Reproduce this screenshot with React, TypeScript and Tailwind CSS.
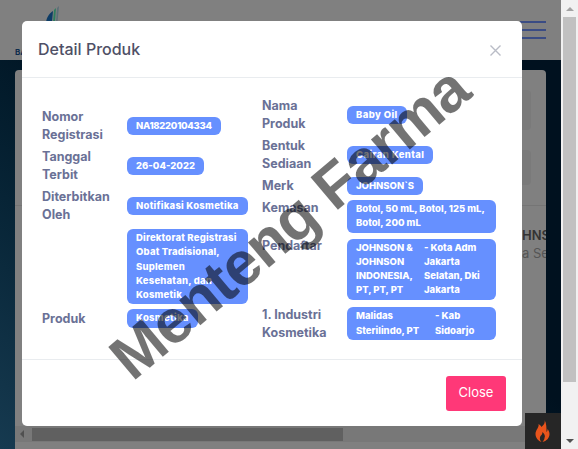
const font = "font-['Inter',sans-serif]";

function Badge({ children, className = "" }: { children: React.ReactNode; className?: string }) {
  return (
    <div className={`flex rounded-[6px] bg-[#6690ff] px-[9px] py-[2px] text-[9.5px] font-extrabold leading-[14.3px] text-white ${className}`}>
      {children}
    </div>
  );
}

function Row({ label, className = "", labelClass = "", children }: { label?: React.ReactNode; className?: string; labelClass?: string; children: React.ReactNode }) {
  return (
    <div className={`flex items-center ${className}`}>
      <div className={`w-[85px] shrink-0 text-[12.5px] font-bold leading-[18px] text-[#6a7196] ${labelClass}`}>{label}</div>
      <div className="flex min-w-0 flex-1">{children}</div>
    </div>
  );
}

export default function App() {
  return (
    <div className="relative h-[449px] w-[578px] overflow-hidden bg-[#f1f1f1] font-['Inter',sans-serif]">
      {/* Page behind the dialog */}
      <div className="h-[449px] w-[561px] bg-gradient-to-bl from-[#00111f] from-45% to-[#163a50]">
        <div className="relative h-[60px] bg-[#808080]">
          <svg className="absolute left-[46px] top-[5px]" width="14" height="17" viewBox="0 0 14 17">
            <path d="M0 17 C1 11 4 8 7 6 L6 17 Z" fill="#0d3c66" />
            <path d="M7 17 L8 5 L10 3 L9 17 Z" fill="#2e7d5e" />
            <path d="M10 17 L11 3 L13 1 L11.5 17 Z" fill="#5c6f78" />
          </svg>
          <span className="absolute left-[15px] top-[46px] text-[8px] font-bold text-[#0e2c4c]">BA</span>
          <div className="absolute left-[520px] top-[21px] flex w-[26px] flex-col gap-[6px]">
            <div className="h-[2px] bg-[#3a4c84]" />
            <div className="h-[2px] bg-[#3a4c84]" />
            <div className="h-[2px] bg-[#3a4c84]" />
          </div>
        </div>
        <div className="ml-[15px] mt-[10px] flex h-[379px] w-[531px] flex-col rounded-t-[4px] bg-[#808080] pt-[20px]">
          <div className="ml-auto mr-[15px] h-[40px] w-[100px] rounded-[4px] bg-[#7a7a7a]" />
          <div className="ml-auto mr-[15px] mt-[20px] h-[35px] w-[100px] rounded-[4px] bg-[#7a7a7a]" />
          <div className="mt-[20px] h-px bg-[#757575]" />
        </div>
      </div>

      {/* Right scrollbar */}
      <div className="absolute right-0 top-0 flex h-[449px] w-[17px] flex-col items-center bg-[#f1f1f1]">
        <div className="flex h-[17px] items-center justify-center">
          <div className="h-0 w-0 border-x-[4px] border-b-[4px] border-x-transparent border-b-[#a3a3a3]" />
        </div>
        <div className="h-[365px] w-[13px] bg-[#c1c1c1]" />
        <div className="mt-auto flex h-[17px] items-center justify-center">
          <div className="h-0 w-0 border-x-[4px] border-t-[4px] border-x-transparent border-t-[#505050]" />
        </div>
      </div>

      {/* Text of the page that shows beside the dialog */}
      <div className="absolute left-[522px] top-[227px] w-[24px] overflow-hidden whitespace-nowrap text-[13px] leading-[17px] text-[#333]">
        <div className="font-semibold">HNS</div>
        <div className="mt-[1px] text-[#555]">a Se</div>
      </div>

      {/* Horizontal scrollbar of the page */}
      <div className="absolute left-[15px] top-[426px] flex h-[16px] w-[510px] items-center bg-[#787878]">
        <div className="ml-[5px] h-0 w-0 border-y-[4px] border-r-[4px] border-y-transparent border-r-[#505050]" />
        <div className="ml-[8px] h-[13px] w-[311px] bg-[#606060]" />
      </div>

      {/* Flame badge */}
      <div className="absolute left-[525px] top-[413px] flex h-[36px] w-[36px] items-center justify-center bg-[#262626]">
        <svg width="17" height="22" viewBox="0 0 16 22">
          <path fillRule="evenodd" d="M9 0c1 3-1 5-3 7C5 5 4 5 3 4c1 3-3 6-3 10 0 4 3 7 6 8-2-2-2-4-1-6 1-1 2-2 2-4 2 2 3 4 2 6 0 1-1 3-2 4 4-1 7-4 7-8 0-2-1-4-2-5 0 1 0 2-1 3C11 8 11 3 9 0z" fill="#e8541c" />
        </svg>
      </div>

      {/* Dialog */}
      <div className={`absolute left-[22px] top-[21px] flex h-[405px] w-[500px] flex-col rounded-[5px] bg-white ${font}`}>
        <div className="flex h-[57px] shrink-0 items-center justify-between border-b border-[#e9ecef] pl-[16px] pr-[21px]">
          <h2 className="text-[16px] font-medium leading-[24px] text-[#4f5066]">Detail Produk</h2>
          <svg width="11" height="11" viewBox="0 0 11 11" className="mt-[2px]">
            <path d="M.5.5l10 10M10.5.5l-10 10" stroke="#b9bcc6" strokeWidth="1.4" />
          </svg>
        </div>

        <div className="grid h-[281px] shrink-0 grid-cols-[220px_1fr] pl-[20px] pr-[26px]">
          <div className="flex flex-col pt-[30px]">
            <Row label={<>Nomor<br />Registrasi</>} className="h-[36px]"><Badge className="tracking-[-0.3px]">NA18220104334</Badge></Row>
            <Row label={<>Tanggal<br />Terbit</>} className="mt-[4px] h-[36px]"><Badge>26-04-2022</Badge></Row>
            <Row label={<>Diterbitkan<br />Oleh</>} className="mt-[4px] h-[36px]"><Badge className="tracking-[0.25px]">Notifikasi Kosmetika</Badge></Row>
            <Row className="mt-[5px]"><Badge className="w-[121px] tracking-[0.2px]">Direktorat Registrasi Obat Tradisional, Suplemen Kesehatan, dan Kosmetik</Badge></Row>
            <Row label="Produk" className="mt-[5px]"><Badge className="tracking-[0.3px]">Kosmetika</Badge></Row>
          </div>
          <div className="flex flex-col pt-[19px]">
            <Row label={<>Nama<br />Produk</>} className="h-[36px]"><Badge className="tracking-[0.4px]">Baby Oil</Badge></Row>
            <Row label={<>Bentuk<br />Sediaan</>} className="mt-[4px] h-[36px]"><Badge className="tracking-[0.4px]">Cairan Kental</Badge></Row>
            <Row label="Merk" className="mt-[4px] h-[18px]"><Badge>JOHNSON`S</Badge></Row>
            <Row label="Kemasan" className="mt-[5px] items-start" labelClass="-mt-[1px]"><Badge className="w-[149px]">Botol, 50 mL, Botol, 125 mL, Botol, 200 mL</Badge></Row>
            <Row label="Pendaftar" className="mt-[6px] items-start" labelClass="-mt-[2px]">
              <Badge className="w-[149px] gap-[10px]">
                <span className="w-[58px] shrink-0">JOHNSON &amp; JOHNSON INDONESIA, PT, PT, PT</span>
                <span>- Kota Adm Jakarta Selatan, Dki Jakarta</span>
              </Badge>
            </Row>
            <Row label={<>1. Industri<br />Kosmetika</>} className="mt-[6px]">
              <Badge className="w-[149px] gap-[14px]">
                <span className="w-[65px] shrink-0">Malidas Sterilindo, PT</span>
                <span>- Kab Sidoarjo</span>
              </Badge>
            </Row>
          </div>
        </div>

        <div className="flex flex-1 items-center justify-end border-t border-[#e9ecef] pr-[16px]">
          <button className="h-[35px] w-[60px] rounded-[3px] bg-[#ff3878] text-[13px] text-white">Close</button>
        </div>
      </div>

      {/* Watermark */}
      <div className="pointer-events-none absolute left-[4px] top-[183px] w-[571px] -rotate-[40deg] whitespace-nowrap text-center font-['Liberation_Sans',sans-serif] text-[62px] font-bold leading-[80px] tracking-[-1px] text-black/55">
        Menteng Farma
      </div>
    </div>
  );
}
